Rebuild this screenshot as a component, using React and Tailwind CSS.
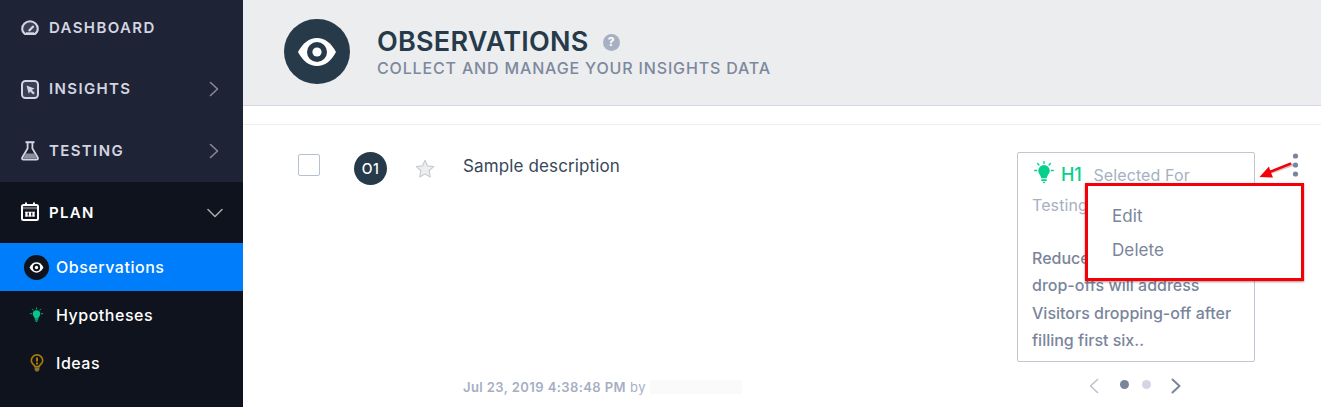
import React from 'react';

const EyeIcon = ({ className, pupil }) => (
  <svg viewBox="0 0 40 30" className={className}>
    <path
      d="M1 15C6 6 12 1 20 1s14 5 19 14c-5 9-11 14-19 14S6 24 1 15Z"
      fill="#fff"
    />
    <circle cx="20" cy="15" r="10" fill={pupil} />
    <circle cx="20" cy="15" r="4.6" fill="#fff" />
  </svg>
);

const GaugeIcon = () => (
  <svg viewBox="0 0 18 16" className="h-4 w-[18px]" fill="none">
    <path
      d="M4.200 14.100C2.400 13 1.200 11 1.200 8.800A7.800 7.600 0 0 1 16.800 8.800c0 2.200-1.200 4.200-3 5.300Z"
      fill="#3c4054"
      stroke="currentColor"
      strokeWidth="2"
      strokeLinejoin="round"
    />
    <path d="m8.500 10.300 3.400-3.600" stroke="currentColor" strokeWidth="2.400" strokeLinecap="round" />
    <path d="M5 12.800h8" stroke="currentColor" strokeWidth="1" />
  </svg>
);

const InsightsIcon = () => (
  <svg viewBox="0 0 18 19" className="h-[19px] w-[18px]" fill="none">
    <rect x="1" y="1" width="16" height="17" rx="3.500" fill="#3c4054" stroke="currentColor" strokeWidth="2" />
    <path d="m5.500 5.500 8 2.900-2.700 1.500 3 3.200-1.600 1.500-3.100-3.200-1.300 2.600Z" fill="currentColor" />
  </svg>
);

const FlaskIcon = () => (
  <svg viewBox="0 0 18 20" className="h-5 w-[18px]" fill="none" stroke="currentColor">
    <path d="M5 12.500h8l3 5H2Z" fill="#8b8e9e" stroke="none" />
    <path d="M4.500 1.200h9" strokeWidth="2" />
    <path
      d="M6.600 1.500v6L1.300 16.500c-.6 1.200 0 2.200 1.200 2.200h13c1.200 0 1.800-1 1.200-2.200L11.400 7.500v-6"
      strokeWidth="1.800"
    />
  </svg>
);

const CalendarIcon = () => (
  <svg viewBox="0 0 18 19" className="h-[19px] w-[18px]" fill="none" stroke="currentColor">
    <rect x="1" y="3" width="16" height="15" rx="1.500" strokeWidth="2" />
    <path d="M5 .5v3M13 .5v3" strokeWidth="2" />
    <path d="M2 6h14" stroke="#686b72" strokeWidth="2.500" />
    <path d="M5.500 10v4.500M9 10v4.500M12.500 10v4.500" strokeWidth="2.200" />
    <path d="M4 10.200h10M4 14h10" strokeWidth=".8" />
  </svg>
);

const BulbIcon = ({ className }) => (
  <svg viewBox="0 0 20 23" className={className} fill="none">
    <path
      d="M10 4a5.800 5.800 0 0 0-5.800 5.800c0 2.700 2.400 4 3.100 7.400h5.400c.7-3.400 3.100-4.700 3.100-7.400A5.800 5.800 0 0 0 10 4Z"
      fill="currentColor"
    />
    <path d="M7.300 18.200h5.400v1.900h-5.400ZM8.200 20.800h3.600L10 22.600Z" fill="currentColor" />
    <path
      d="M10 .4v2M3.600 2.500l1.300 1.500M16.400 2.500l-1.300 1.500M.6 9.500h2M17.400 9.500h2"
      stroke="currentColor"
      strokeWidth="1.300"
      strokeLinecap="round"
    />
  </svg>
);

const IdeaIcon = () => (
  <svg viewBox="0 0 14 18" className="h-[18px] w-3.5" fill="none">
    <path
      d="M4.800 12.500C4.700 10.800 1.300 9.900 1.300 6.500a5.700 5.600 0 0 1 11.400 0c0 3.400-3.400 4.300-3.500 6Z"
      stroke="#a87b06"
      strokeWidth="1.700"
    />
    <path d="M7 3.500v4" stroke="#a87b06" strokeWidth="2" />
    <path d="M7 8.500v1.900" stroke="#a87b06" strokeWidth="2" />
    <path d="M4.600 13.300h4.800v2.500L8.200 17.500H5.800l-1.200-1.700Z" fill="#89712f" />
  </svg>
);

const Chevron = ({ className, d }) => (
  <svg viewBox="0 0 16 16" className={className} fill="none" stroke="currentColor">
    <path d={d} strokeLinecap="round" strokeLinejoin="round" />
  </svg>
);

const RIGHT = 'm4.500 1.500 7 6.500-7 6.500';
const LEFT = 'm11.500 1.500-7 6.500 7 6.500';
const DOWN = 'M1 4.500 8 11.500l7-7';

const menuItems = [
  { label: 'DASHBOARD', icon: <GaugeIcon />, height: 'h-[61px]' },
  { label: 'INSIGHTS', icon: <InsightsIcon />, height: 'h-[62px]', arrow: true },
  { label: 'TESTING', icon: <FlaskIcon />, height: 'h-[62px]', arrow: true },
];

const planItems = [
  {
    label: 'Observations',
    active: true,
    icon: (
      <span className="flex size-[25px] items-center justify-center rounded-full bg-[#0f131d]">
        <EyeIcon className="h-[11px] w-[15px]" pupil="#0f131d" />
      </span>
    ),
  },
  { label: 'Hypotheses', icon: <BulbIcon className="h-4 w-[13px] text-[#05c589]" /> },
  { label: 'Ideas', icon: <IdeaIcon /> },
];

const Sidebar = () => (
  <aside className="flex w-[243px] shrink-0 flex-col bg-[#1f2336]">
    <nav className="-mt-[3px]">
      {menuItems.map((item) => (
        <div
          key={item.label}
          className={`flex items-center pr-[21px] pl-[21px] text-[#d3d5e0] ${item.height}`}
        >
          <span className="flex w-7 shrink-0">{item.icon}</span>
          <span className="flex-1 text-[15px] leading-5 font-semibold tracking-[1.37px]">
            {item.label}
          </span>
          {item.arrow && <Chevron className="size-4 stroke-[1.6] text-[#85899a]" d={RIGHT} />}
        </div>
      ))}
    </nav>
    <div className="flex-1 bg-[#0f131d]">
      <div className="flex h-[61px] items-center pr-[20px] pl-[21px] text-white">
        <span className="-mt-[3px] flex w-7 shrink-0">
          <CalendarIcon />
        </span>
        <span className="flex-1 text-[15px] leading-5 font-semibold tracking-[1.3px]">PLAN</span>
        <Chevron className="size-4 stroke-[1.6] text-[#a5a7ae]" d={DOWN} />
      </div>
      {planItems.map((item) => (
        <div
          key={item.label}
          className={`flex h-12 items-center pl-6 text-white ${item.active ? 'bg-[#007dfb]' : ''}`}
        >
          <span className="flex w-[25px] shrink-0 justify-center">{item.icon}</span>
          <span className="ml-[7px] text-[16px] leading-5 font-medium tracking-[0.52px]">
            {item.label}
          </span>
        </div>
      ))}
    </div>
  </aside>
);

const PageHeader = () => (
  <header className="flex h-[106px] items-start border-b border-[#d4d7e3] bg-[#ecedef] pl-[41px]">
    <div className="mt-[19px] flex h-[65px] w-[66px] items-center justify-center rounded-full bg-[#263a49]">
      <EyeIcon className="h-[30px] w-10" pupil="#263a49" />
    </div>
    <div className="mt-6 ml-[27px]">
      <div className="flex items-center">
        <h1 className="text-[27px] leading-9 font-semibold tracking-[0.25px] text-[#263a49]">
          OBSERVATIONS
        </h1>
        <span className="ml-[14px] flex size-[17px] items-center justify-center rounded-full bg-[#a7b0c2] text-[12px] font-bold text-white">
          ?
        </span>
      </div>
      <p className="text-[16px] leading-4 font-medium tracking-[0.84px] text-[#7d889d]">
        COLLECT AND MANAGE YOUR INSIGHTS DATA
      </p>
    </div>
  </header>
);

const HypothesisCard = () => (
  <div className="h-[210px] w-[238px] rounded-[2px] border border-[#bfc7d3] px-[14px] text-[16px]">
    <div className="mt-[7px] leading-[30px] tracking-[0.1px] text-[#a7b0c2]">
      <BulbIcon className="mr-[7px] ml-0.5 inline h-[23px] w-5 align-[-3px] text-[#05d08c]" />
      <span className="mr-3 text-[18px] font-medium tracking-[-0.2px] text-[#05d08c]">H1</span>
      Selected For
      <br />
      Testing
    </div>
    <p className="mt-[25px] leading-[27.3px] font-medium text-[#7a859b]">
      Reduce
      <br />
      drop-offs will address
      <br />
      Visitors dropping-off after
      <br />
      filling first six..
    </p>
  </div>
);

const CardPager = () => (
  <div className="mt-4 flex items-center pl-[69px]">
    <Chevron className="size-4 stroke-[1.5] text-[#b9c0ca]" d={LEFT} />
    <span className="-mt-[3px] ml-[18px] size-[9px] rounded-full bg-[#7a859b]" />
    <span className="-mt-[3px] ml-[13px] size-[9px] rounded-full bg-[#d3d5e4]" />
    <Chevron className="ml-[17px] size-4 stroke-2 text-[#7a859b]" d={RIGHT} />
  </div>
);

const ActionMenu = () => (
  <div className="absolute top-[31px] left-[68px] h-[98px] w-[219px] border-[3px] border-[#f40009] bg-white pt-[13px] pl-6 text-[17px] leading-[34px] tracking-[0.1px] text-[#7a859b] shadow-[0_1px_2px_rgba(90,30,30,0.5)]">
    <div>Edit</div>
    <div>Delete</div>
  </div>
);

const ObservationRow = () => (
  <div className="mt-[18px] flex h-[283px] items-start border-t border-[#eeeef0]">
    <span className="mt-[29px] ml-[55px] size-[22px] rounded-[2px] border-[1.5px] border-[#b7c0d0]" />
    <span className="mt-[27px] ml-[34px] flex size-[33px] items-center justify-center rounded-full bg-[#263a49] text-[14px] font-medium tracking-[0.4px] text-white">
      O1
    </span>
    <svg viewBox="0 0 20 20" className="mt-[34px] ml-[28px] size-5">
      <path
        d="m10 1.300 2.500 5.600 6.200.7-4.600 4.100 1.200 6.300L10 15l-5.300 3 1.200-6.300-4.600-4.100 6.200-.7Z"
        fill="#eeeeef"
        stroke="#c9cdd3"
        strokeWidth="1.200"
        strokeLinejoin="round"
      />
    </svg>
    <div className="mt-[29px] ml-[28px] flex h-[243px] w-[554px] flex-col justify-between">
      <p className="text-[17px] leading-6 tracking-[0.13px] text-[#36475a]">Sample description</p>
      <div className="flex items-center text-[13px] leading-5 tracking-[0.42px] text-[#a5afc2]">
        <span>
          <span className="font-semibold">Jul 23, 2019 4:38:48 PM</span> by
        </span>
        <span className="ml-1 h-[14px] w-[92px] bg-[#fafafb]" />
      </div>
    </div>
    <div className="relative mt-[27px] w-[290px]">
      <div className="flex">
        <HypothesisCard />
        <svg viewBox="0 0 50 34" className="h-[34px] w-[50px]">
          <path d="M38 12.500 14 21" stroke="#8c7478" strokeWidth="3" opacity=".4" />
          <path d="M36 11.500 12 21" stroke="#f40009" strokeWidth="2.600" />
          <path d="M4.500 25 14 14.500l1.300 4.800 2.700 6.200Z" fill="#f40009" />
          <circle cx="40.500" cy="4" r="2.600" fill="#7a859b" />
          <circle cx="40.500" cy="13" r="2.600" fill="#7a859b" />
          <circle cx="40.500" cy="22" r="2.600" fill="#7a859b" />
        </svg>
      </div>
      <CardPager />
      <ActionMenu />
    </div>
  </div>
);

const App = () => (
  <div className="flex h-[407px] w-[1321px] overflow-hidden bg-white font-['Inter',sans-serif]">
    <Sidebar />
    <main className="min-w-0 flex-1">
      <PageHeader />
      <ObservationRow />
    </main>
  </div>
);

export default App;
